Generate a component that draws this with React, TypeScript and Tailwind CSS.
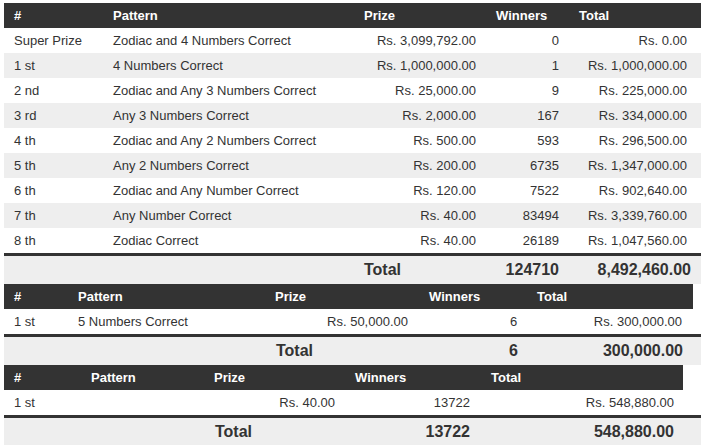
import React from "react";

type Cell = { t: string; w: string; a?: "l" | "r" };

const font = { fontFamily: '"Liberation Sans", Arial, sans-serif' };

function HeadRow({ cells, width }: { cells: Cell[]; width: string }) {
  return (
    <div className={`flex h-[25px] items-center bg-[#333333] text-[13px] font-bold text-white ${width}`}>
      {cells.map((c, i) => (
        <div key={i} className={`${c.w} shrink-0 pl-[10px] whitespace-nowrap`}>
          {c.t}
        </div>
      ))}
    </div>
  );
}

function BodyRow({ cells, grey }: { cells: Cell[]; grey?: boolean }) {
  return (
    <div className={`flex h-[25px] w-[697px] items-center text-[13px] text-[#333333] ${grey ? "bg-[#eeeeee]" : "bg-white"}`}>
      {cells.map((c, i) => (
        <div
          key={i}
          className={`${c.w} shrink-0 whitespace-nowrap ${c.a === "r" ? "pr-[10px] text-right" : "pl-[10px] text-left"}`}
        >
          {c.t}
        </div>
      ))}
    </div>
  );
}

function TotalRow({ cells }: { cells: Cell[] }) {
  return (
    <div className="flex h-[31px] w-[697px] items-center border-t-[3px] border-[#333333] bg-[#eeeeee] text-[16px] font-bold text-[#333333]">
      {cells.map((c, i) => (
        <div
          key={i}
          className={`${c.w} shrink-0 whitespace-nowrap ${c.a === "r" ? "pr-[10px] text-right" : "pl-[10px] text-left"}`}
        >
          {c.t}
        </div>
      ))}
    </div>
  );
}

const t1 = [
  ["Super Prize", "Zodiac and 4 Numbers Correct", "Rs. 3,099,792.00", "0", "Rs. 0.00"],
  ["1 st", "4 Numbers Correct", "Rs. 1,000,000.00", "1", "Rs. 1,000,000.00"],
  ["2 nd", "Zodiac and Any 3 Numbers Correct", "Rs. 25,000.00", "9", "Rs. 225,000.00"],
  ["3 rd", "Any 3 Numbers Correct", "Rs. 2,000.00", "167", "Rs. 334,000.00"],
  ["4 th", "Zodiac and Any 2 Numbers Correct", "Rs. 500.00", "593", "Rs. 296,500.00"],
  ["5 th", "Any 2 Numbers Correct", "Rs. 200.00", "6735", "Rs. 1,347,000.00"],
  ["6 th", "Zodiac and Any Number Correct", "Rs. 120.00", "7522", "Rs. 902,640.00"],
  ["7 th", "Any Number Correct", "Rs. 40.00", "83494", "Rs. 3,339,760.00"],
  ["8 th", "Zodiac Correct", "Rs. 40.00", "26189", "Rs. 1,047,560.00"],
];

export default function App() {
  return (
    <div className="min-h-[445px] bg-white pl-[4px] pt-[3px]" style={font}>
      {/* Table 1 */}
      <HeadRow
        width="w-[697px]"
        cells={[
          { t: "#", w: "w-[99px]" },
          { t: "Pattern", w: "w-[251px]" },
          { t: "Prize", w: "w-[132px]" },
          { t: "Winners", w: "w-[83px]" },
          { t: "Total", w: "w-[132px]" },
        ]}
      />
      {t1.map((r, i) => (
        <BodyRow
          key={i}
          grey={i % 2 === 1}
          cells={[
            { t: r[0], w: "w-[99px]" },
            { t: r[1], w: "w-[251px]" },
            { t: r[2], w: "w-[132px]", a: "r" },
            { t: r[3], w: "w-[83px]", a: "r" },
            { t: r[4], w: "w-[128px]", a: "r" },
          ]}
        />
      ))}
      <TotalRow
        cells={[
          { t: "", w: "w-[350px]" },
          { t: "Total", w: "w-[132px]" },
          { t: "124710", w: "w-[83px]", a: "r" },
          { t: "8,492,460.00", w: "w-[132px]", a: "r" },
        ]}
      />

      {/* Table 2 */}
      <HeadRow
        width="w-[689px]"
        cells={[
          { t: "#", w: "w-[64px]" },
          { t: "Pattern", w: "w-[197px]" },
          { t: "Prize", w: "w-[154px]" },
          { t: "Winners", w: "w-[108px]" },
          { t: "Total", w: "w-[166px]" },
        ]}
      />
      <BodyRow
        cells={[
          { t: "1 st", w: "w-[64px]" },
          { t: "5 Numbers Correct", w: "w-[197px]" },
          { t: "Rs. 50,000.00", w: "w-[153px]", a: "r" },
          { t: "", w: "w-[82px]" },
          { t: "6", w: "w-[80px]" },
          { t: "Rs. 300,000.00", w: "w-[112px]", a: "r" },
        ]}
      />
      <TotalRow
        cells={[
          { t: "", w: "w-[262px]" },
          { t: "Total", w: "w-[233px]" },
          { t: "6", w: "w-[92px]" },
          { t: "300,000.00", w: "w-[102px]", a: "r" },
        ]}
      />

      {/* Table 3 */}
      <HeadRow
        width="w-[679px]"
        cells={[
          { t: "#", w: "w-[77px]" },
          { t: "Pattern", w: "w-[123px]" },
          { t: "Prize", w: "w-[141px]" },
          { t: "Winners", w: "w-[136px]" },
          { t: "Total", w: "w-[202px]" },
        ]}
      />
      <BodyRow
        cells={[
          { t: "1 st", w: "w-[77px]" },
          { t: "", w: "w-[123px]" },
          { t: "Rs. 40.00", w: "w-[141px]", a: "r" },
          { t: "13722", w: "w-[135px]", a: "r" },
          { t: "Rs. 548,880.00", w: "w-[204px]", a: "r" },
        ]}
      />
      <TotalRow
        cells={[
          { t: "", w: "w-[201px]" },
          { t: "Total", w: "w-[175px]" },
          { t: "13722", w: "w-[100px]", a: "r" },
          { t: "548,880.00", w: "w-[204px]", a: "r" },
        ]}
      />
    </div>
  );
}
